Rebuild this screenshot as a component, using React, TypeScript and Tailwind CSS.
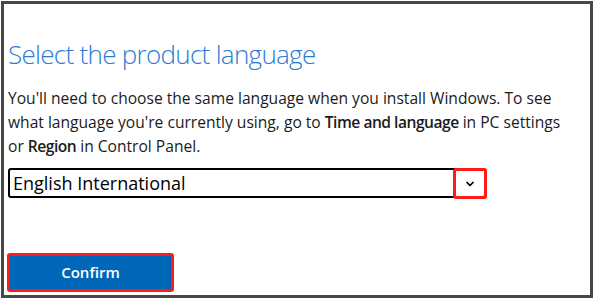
import React from 'react'
import { ChevronDown } from 'lucide-react'

function App() {
  return (
    <div className="w-[595px] h-[299px] bg-white pt-px pl-px" style={{ fontFamily: '"Open Sans", "Noto Sans", sans-serif' }}>
      <div className="w-[592px] h-[297px] border-[3px] border-[#474747] bg-white pl-[4px] pt-[32px]">
        <h1 className="text-[26px] font-light leading-[36px] text-[#2b7cd3] tracking-[-0.7px]">Select the product language</h1>
        <p className="mt-[14px] text-[15.6px] leading-[24px] text-[#1b1b1b]">
          You'll need to choose the same language when you install Windows. To see<br />
          what language you're currently using, go to <b className="font-semibold tracking-[-0.5px]">Time and language</b> in PC settings<br />
          or <b className="font-semibold tracking-[-0.5px]">Region</b> in Control Panel.
        </p>
        <div className="mt-[10px] relative w-[478px] h-[30px] border-2 border-black rounded-[3px] flex items-center pl-[3px]">
          <span className="text-[18px] text-black">English International</span>
          <div className="absolute -right-[3px] -top-[2px] w-[34px] h-[31px] border-[3px] border-[#ff1a1a] rounded-[3px] flex items-center justify-center">
            <ChevronDown size={12} strokeWidth={3.5} className="text-black" />
          </div>
        </div>
        <div className="mt-[55px] w-[167px] h-[39px] border-[3px] border-[#ff1a1a] rounded-[3px] -ml-[1px]">
          <button className="w-full h-full bg-[#0067b8] text-white text-[15px] font-semibold">Confirm</button>
        </div>
      </div>
    </div>
  )
}

export default App
